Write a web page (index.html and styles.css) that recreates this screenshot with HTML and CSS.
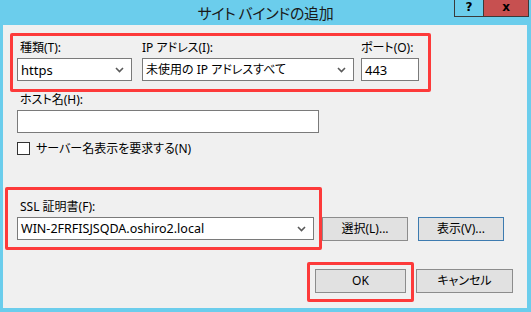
FILE: index.html
```html
<!DOCTYPE html>
<html lang="ja">
<head>
<meta charset="utf-8">
<title>サイト バインドの追加</title>
<link rel="stylesheet" href="styles.css">
</head>
<body>
<div class="window">
  <div class="titlebar">
    <div class="title">サイト バインドの追加</div>
    <div class="caption-btns">
      <div class="cbtn help">?</div>
      <div class="cbtn close">x</div>
    </div>
  </div>
  <div class="client">
    <div class="row1">
      <div class="field">
        <div class="label">種類(T):</div>
        <div class="select w-type"><span>https</span><svg class="chev" width="9" height="6" viewBox="0 0 9 6"><polyline points="1,1 4.5,4.5 8,1" fill="none" stroke="#5a5a5a" stroke-width="1.6"/></svg></div>
      </div>
      <div class="field">
        <div class="label flush">IP アドレス(I):</div>
        <div class="select w-ip"><span>未使用の IP アドレスすべて</span><svg class="chev" width="9" height="6" viewBox="0 0 9 6"><polyline points="1,1 4.5,4.5 8,1" fill="none" stroke="#5a5a5a" stroke-width="1.6"/></svg></div>
      </div>
      <div class="field">
        <div class="label flush">ポート(O):</div>
        <div class="input w-port">443</div>
      </div>
    </div>

    <div class="field host">
      <div class="label">ホスト名(H):</div>
      <div class="input w-host"></div>
    </div>

    <div class="check">
      <span class="box"></span>
      <span class="check-label">サーバー名表示を要求する(N)</span>
    </div>

    <div class="ssl">
      <div class="label">SSL 証明書(F):</div>
      <div class="ssl-row">
        <div class="select w-ssl"><span>WIN-2FRFISJSQDA.oshiro2.local</span><svg class="chev" width="9" height="6" viewBox="0 0 9 6"><polyline points="1,1 4.5,4.5 8,1" fill="none" stroke="#5a5a5a" stroke-width="1.6"/></svg></div>
        <div class="btn w-small">選択(L)...</div>
        <div class="btn w-small focus">表示(V)...</div>
      </div>
    </div>

    <div class="footer">
      <div class="btn w-ok">OK</div>
      <div class="btn w-cancel">キャンセル</div>
    </div>

    <div class="mark m1"></div>
    <div class="mark m2"></div>
    <div class="mark m3"></div>
  </div>
</div>
</body>
</html>
```

FILE: styles.css
```css
* { box-sizing: border-box; }

html, body {
  margin: 0;
  padding: 0;
  width: 531px;
  height: 312px;
  overflow: hidden;
}

body {
  font-family: "Noto Sans", "Noto Sans CJK JP", sans-serif;
  font-size: 12px;
  color: #000;
  font-feature-settings: "palt";
}

.window {
  width: 531px;
  height: 312px;
  background: #6bcdec;
  padding: 0 4px 4px 3px;
  display: flex;
  flex-direction: column;
}

.titlebar {
  position: relative;
  height: 25px;
  flex: none;
  display: flex;
  justify-content: center;
  margin: 0 -4px 0 -3px;
}

.title {
  font-family: "Noto Sans CJK JP", sans-serif;
  font-size: 15px;
  line-height: 25px;
  color: #1a1a1a;
  letter-spacing: -0.3px;
}

.caption-btns {
  position: absolute;
  top: 0;
  right: 2px;
  display: flex;
}

.cbtn {
  height: 17px;
  border: 1px solid #3a3a3a;
  border-top: none;
  font-family: "DejaVu Sans", sans-serif;
  font-weight: bold;
  font-size: 12px;
  line-height: 14px;
  text-align: center;
  color: #000;
}

.help {
  width: 29px;
  border-right: none;
}

.close {
  width: 46px;
  background: #c75050;
}

.client {
  position: relative;
  flex: 1;
  background: #f0f0f0;
  padding: 15px 14px 0 14px;
  display: flex;
  flex-direction: column;
}

.label {
  font-family: "Noto Sans", "Noto Sans CJK JP", sans-serif;
  line-height: 16px;
  height: 16px;
  margin: 0 0 2px 3px;
  white-space: nowrap;
}

.label.flush {
  margin-left: 0;
}

.row1 {
  display: flex;
}

.row1 .field + .field {
  margin-left: 10px;
}

.row1 .field:last-child {
  margin-left: 7px;
}

.select, .input {
  height: 23px;
  background: #fff;
  border: 1px solid #7a7a7a;
  display: flex;
  align-items: center;
  padding: 0 7px 0 3px;
  line-height: 20px;
  white-space: nowrap;
}

.select span {
  flex: 1;
}

.chev {
  flex: none;
}

.w-type { width: 115px; font-size: 13px; }
.w-ip { width: 212px; }
.w-port { width: 58px; font-size: 13px; }
.w-host { width: 302px; }

.host {
  margin-top: 11px;
}

.check {
  margin-top: 9px;
  display: flex;
  align-items: center;
  height: 13px;
}

.box {
  width: 13px;
  height: 13px;
  background: #fff;
  border: 1px solid #333;
  flex: none;
}

.check-label {
  margin-left: 6px;
  line-height: 16px;
}

.ssl {
  margin-top: 44px;
}

.ssl .label {
  margin-bottom: 2px;
}

.ssl-row {
  display: flex;
  align-items: flex-start;
}

.w-ssl {
  width: 297px;
  font-size: 12.5px;
}

.btn {
  height: 24px;
  background: #e1e1e1;
  border: 1px solid #8c8c8c;
  display: flex;
  align-items: center;
  justify-content: center;
  white-space: nowrap;
  line-height: 20px;
}

.w-small {
  width: 86px;
}

.ssl-row .btn {
  margin-left: 8px;
}

.ssl-row .btn + .btn {
  margin-left: 10px;
}

.btn.focus {
  border-color: #3d7bb0;
}

.footer {
  margin-top: 28px;
  display: flex;
  justify-content: flex-end;
  padding-right: 0;
}

.w-ok {
  width: 91px;
  margin-right: 10px;
}

.w-cancel {
  width: 97px;
  margin-right: 0;
}

.mark {
  position: absolute;
  border: 3px solid #fd3a3a;
  border-radius: 2px;
}

.m1 { left: 7px; top: 8px; width: 421px; height: 59px; }
.m2 { left: 2px; top: 162px; width: 317px; height: 63px; }
.m3 { left: 304px; top: 237px; width: 107px; height: 40px; }
```
